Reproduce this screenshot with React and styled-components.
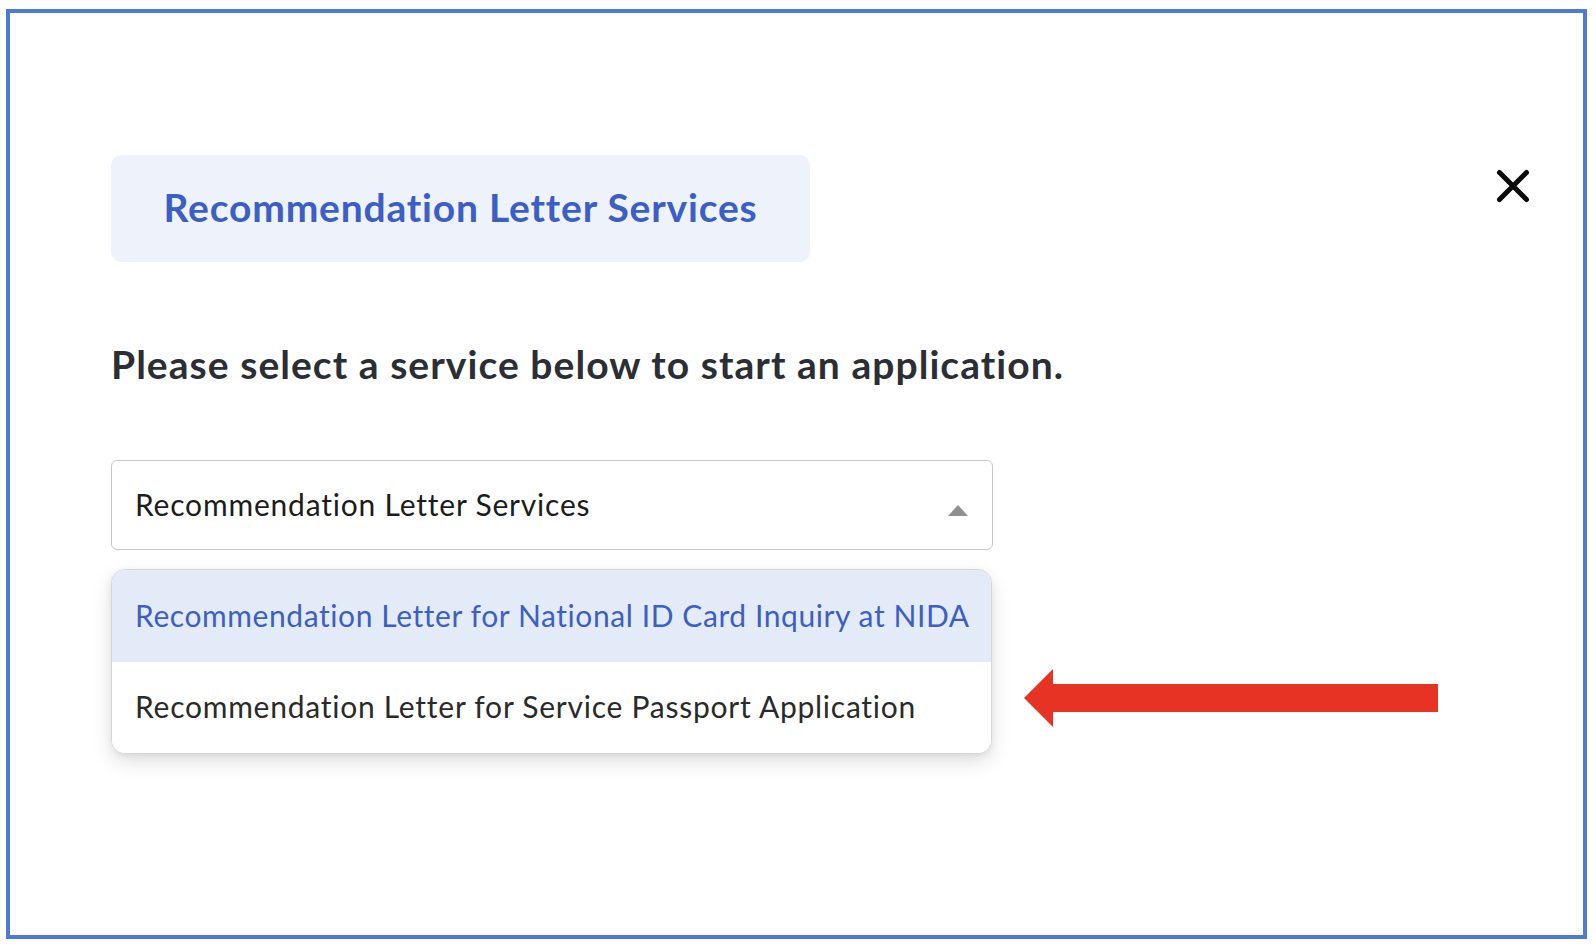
import React from "react";
import styled, { createGlobalStyle } from "styled-components";

const Global = createGlobalStyle`
  html, body { margin: 0; padding: 0; background: #ffffff; }
  body { font-family: "Lato", "Open Sans", sans-serif; }
  * { box-sizing: border-box; }
`;

const Page = styled.div`
  width: 1596px;
  height: 950px;
  padding: 9px 9px 11px 6px;
`;

const Frame = styled.div`
  width: 1581px;
  height: 930px;
  border: 4px solid #4e7ad6;
  padding: 142px 53px 0 101px;
  display: flex;
  flex-direction: column;
`;

const HeaderRow = styled.div`
  display: flex;
  justify-content: space-between;
  align-items: flex-start;
`;

const TitleBox = styled.div`
  width: 699px;
  height: 107px;
  border-radius: 10px;
  background: #eef2fb;
  display: flex;
  align-items: center;
  justify-content: center;
  padding-bottom: 3px;
  color: #3c5ec5;
  font-size: 39px;
  font-weight: 700;
  letter-spacing: 0.8px;
`;

const CloseButton = styled.button`
  margin-top: 14px;
  width: 34px;
  height: 34px;
  padding: 0;
  border: none;
  background: none;
  display: flex;
  cursor: pointer;
`;

const Heading = styled.h2`
  margin: 78px 0 0 0;
  font-size: 39px;
  line-height: 48px;
  font-weight: 700;
  color: #2b2e35;
  letter-spacing: 1.05px;
`;

const SelectBox = styled.div`
  margin-top: 72px;
  width: 882px;
  height: 90px;
  border: 1.5px solid #c8c8c8;
  border-radius: 6px;
  display: flex;
  align-items: center;
  justify-content: space-between;
  padding: 0 24px 3px 23px;
  font-size: 30px;
  letter-spacing: 0.8px;
  color: #1c1c1c;
`;

const Caret = styled.span`
  width: 0;
  height: 0;
  border-left: 10px solid transparent;
  border-right: 10px solid transparent;
  border-bottom: 11px solid #8f8f8f;
  margin-top: 13px;
`;

const MenuRow = styled.div`
  margin-top: 19px;
  display: flex;
  align-items: flex-start;
`;

const Menu = styled.div`
  width: 881px;
  border: 1px solid #d6d6d6;
  border-radius: 14px;
  overflow: hidden;
  background: #ffffff;
  box-shadow: 0 8px 20px rgba(0, 0, 0, 0.12), 0 2px 6px rgba(0, 0, 0, 0.06);
`;

const Option = styled.div`
  height: ${(p) => (p.$active ? "92px" : "91px")};
  display: flex;
  align-items: center;
  padding: 0 0 3px 23px;
  font-size: 30px;
  letter-spacing: ${(p) => (p.$active ? "0.58px" : "0.75px")};
  background: ${(p) => (p.$active ? "#e3ebf8" : "#ffffff")};
  color: ${(p) => (p.$active ? "#3d5fc4" : "#2a2a2a")};
`;

const Arrow = styled.svg`
  margin-left: 32px;
  margin-top: 100px;
`;

export default function App() {
  return (
    <>
      <Global />
      <Page>
        <Frame>
          <HeaderRow>
            <TitleBox>Recommendation Letter Services</TitleBox>
            <CloseButton aria-label="Close">
              <svg width="34" height="34" viewBox="0 0 34 34">
                <path d="M3.5 3.5 L30.5 30.5 M30.5 3.5 L3.5 30.5" stroke="#0a0a0a" strokeWidth="5" strokeLinecap="round" />
              </svg>
            </CloseButton>
          </HeaderRow>
          <Heading>Please select a service below to start an application.</Heading>
          <SelectBox>
            <span>Recommendation Letter Services</span>
            <Caret />
          </SelectBox>
          <MenuRow>
            <Menu>
              <Option $active>Recommendation Letter for National ID Card Inquiry at NIDA</Option>
              <Option>Recommendation Letter for Service Passport Application</Option>
            </Menu>
            <Arrow width="416" height="58" viewBox="0 0 416 58">
              <polygon points="0,29 29,0 29,15 414,15 414,43 29,43 29,58" fill="#e73323" />
            </Arrow>
          </MenuRow>
        </Frame>
      </Page>
    </>
  );
}
